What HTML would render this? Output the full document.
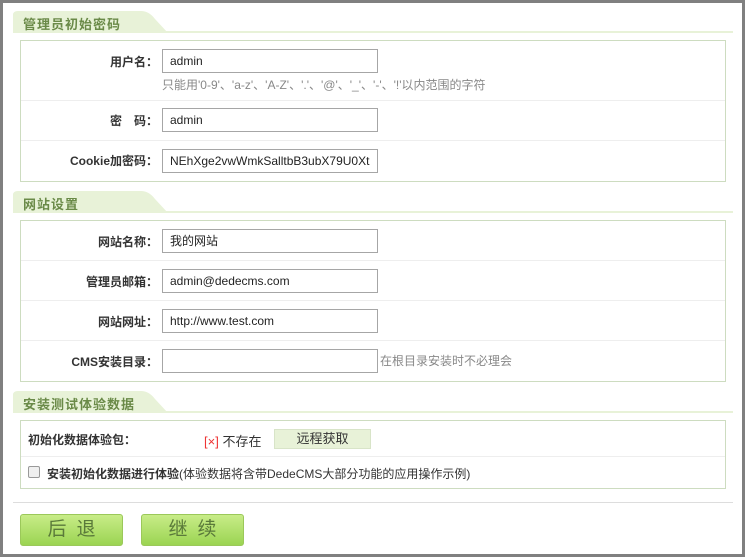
<!DOCTYPE html><html><head><meta charset="utf-8"><style>
*{margin:0;padding:0;box-sizing:border-box}
body{width:745px;height:557px;background:#808080;position:relative;overflow:hidden;font-family:"Liberation Sans","Noto Sans CJK SC",sans-serif;font-size:12px;color:#333}
#pg{position:absolute;left:3px;top:3px;width:739px;height:551px;background:#fff}
.a{position:absolute}
.hd{position:absolute;left:10px;width:720px;height:22px}
.hd .ln{position:absolute;left:0;right:0;bottom:0;height:2px;background:#e8f2d8}
.hd svg{position:absolute;left:0;top:0}
.hd span{position:absolute;left:10px;top:3px;font-weight:bold;font-size:13px;color:#6a8a48;letter-spacing:1px}
.box{position:absolute;left:17px;width:706px;border:1px solid #cddcc0}
.row{position:absolute;left:0;right:0;border-top:1px solid #eee}
.lb{position:absolute;right:567px;font-weight:bold;color:#333;white-space:nowrap;font-size:12px}
.in{position:absolute;left:141px;width:216px;height:24px;border:1px solid #a6a6a6;padding-left:7px;line-height:22px;font-size:12px;color:#222;white-space:nowrap;overflow:hidden}
.tip{position:absolute;color:#888;white-space:nowrap}
.btn{position:absolute;top:511px;width:103px;height:32px;border:1px solid #9bc85a;border-radius:3px;background:linear-gradient(#c8ec88,#9bd452);color:#5a7a3a;font-size:19px;text-align:center;line-height:30px;letter-spacing:10px;text-indent:10px}
</style></head><body><div id="pg">
<div class="hd" style="top:8px"><svg width="160" height="22"><path d="M0 4Q0 0 5 0H128Q136 0 142 8L155 22H0Z" fill="#e8f2d8"/></svg><div class="ln"></div><span>管理员初始密码</span></div>
<div class="box" style="top:37px;height:142px">
<div class="lb" style="top:12px">用户名：</div>
<div class="in" style="top:8px">admin</div>
<div class="tip" style="left:141px;top:35px">只能用'0-9'、'a-z'、'A-Z'、'.'、'@'、'_'、'-'、'!'以内范围的字符</div>
<div class="row" style="top:59px;height:40px"><div class="lb" style="top:11px">密　码：</div><div class="in" style="top:7px">admin</div></div>
<div class="row" style="top:99px;height:41px"><div class="lb" style="top:11px">Cookie加密码：</div><div class="in" style="top:8px">NEhXge2vwWmkSalltbB3ubX79U0Xt</div></div>
</div>
<div class="hd" style="top:188px"><svg width="160" height="22"><path d="M0 4Q0 0 5 0H128Q136 0 142 8L155 22H0Z" fill="#e8f2d8"/></svg><div class="ln"></div><span>网站设置</span></div>
<div class="box" style="top:217px;height:162px">
<div class="lb" style="top:12px">网站名称：</div><div class="in" style="top:8px">我的网站</div>
<div class="row" style="top:39px;height:40px"><div class="lb" style="top:12px">管理员邮箱：</div><div class="in" style="top:8px">admin@dedecms.com</div></div>
<div class="row" style="top:79px;height:40px"><div class="lb" style="top:12px">网站网址：</div><div class="in" style="top:8px">http://www.test.com</div></div>
<div class="row" style="top:119px;height:42px"><div class="lb" style="top:12px">CMS安装目录：</div><div class="in" style="top:8px"></div><div class="tip" style="left:359px;top:11px">在根目录安装时不必理会</div></div>
</div>
<div class="hd" style="top:388px"><svg width="160" height="22"><path d="M0 4Q0 0 5 0H128Q136 0 142 8L155 22H0Z" fill="#e8f2d8"/></svg><div class="ln"></div><span>安装测试体验数据</span></div>
<div class="box" style="top:417px;height:69px">
<div class="a" style="left:7px;top:10px;font-weight:bold">初始化数据体验包：</div>
<div class="a" style="left:183px;top:10px;white-space:nowrap;font-size:13px"><span style="color:#e33">[×]</span> 不存在</div>
<div class="a" style="left:253px;top:8px;width:97px;height:20px;background:#e8f2d8;border:1px solid #d8e4c8;text-align:center;line-height:18px;font-size:13px">远程获取</div>
<div class="row" style="top:35px;height:33px">
<div class="a" style="left:7px;top:9px;width:12px;height:12px;border:1px solid #999;border-radius:2px;background:#f0f0f0"></div>
<div class="a" style="left:26px;top:8px;white-space:nowrap"><b>安装初始化数据进行体验</b>(体验数据将含带DedeCMS大部分功能的应用操作示例)</div>
</div></div>
<div class="a" style="left:10px;top:499px;width:720px;height:1px;background:#ddd"></div>
<div class="btn" style="left:17px">后退</div>
<div class="btn" style="left:138px">继续</div>
</div></body></html>
